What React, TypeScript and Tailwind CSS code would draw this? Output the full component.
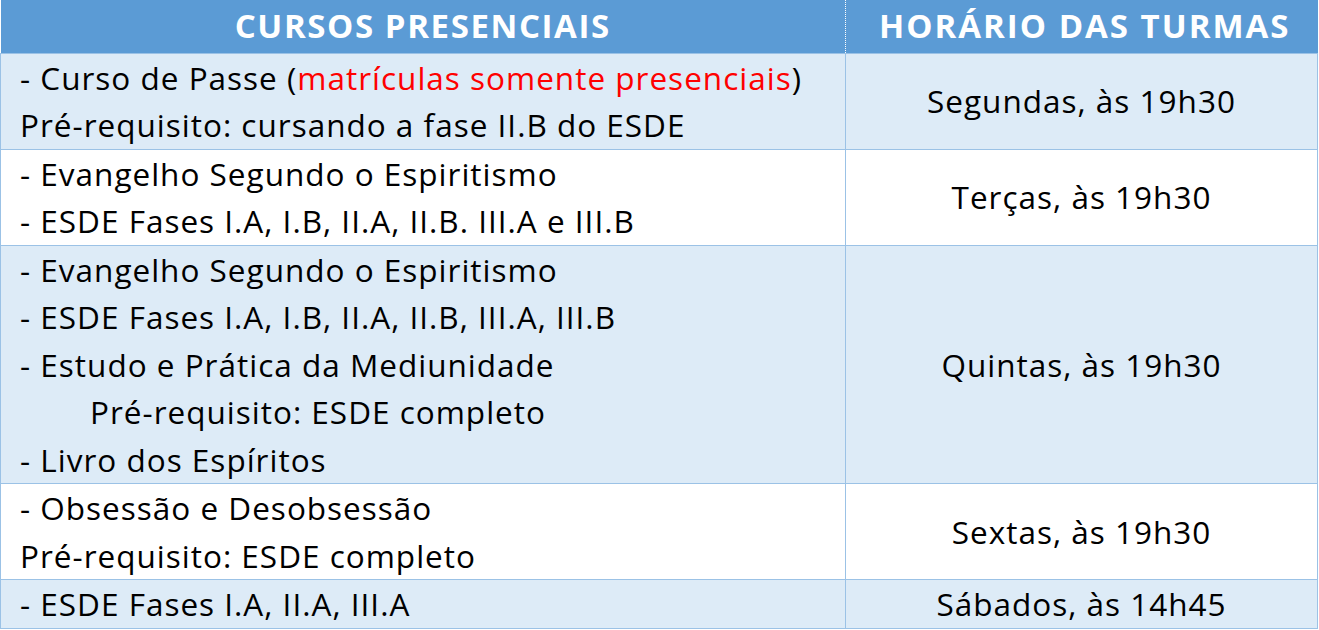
import React from "react";

type Row = {
  lines: React.ReactNode[];
  time: string;
  shaded: boolean;
};

const ROWS: Row[] = [
  {
    lines: [
      <>
        - Curso de Passe (<span className="text-[#ff0000]">matrículas somente presenciais</span>)
      </>,
      "Pré-requisito: cursando a fase II.B do ESDE",
    ],
    time: "Segundas, às 19h30",
    shaded: true,
  },
  {
    lines: ["- Evangelho Segundo o Espiritismo", "- ESDE Fases I.A, I.B, II.A, II.B. III.A e III.B"],
    time: "Terças, às 19h30",
    shaded: false,
  },
  {
    lines: [
      "- Evangelho Segundo o Espiritismo",
      "- ESDE Fases I.A, I.B, II.A, II.B, III.A, III.B",
      "- Estudo e Prática da Mediunidade",
      <span className="pl-[70px]">Pré-requisito: ESDE completo</span>,
      "- Livro dos Espíritos",
    ],
    time: "Quintas, às 19h30",
    shaded: true,
  },
  {
    lines: ["- Obsessão e Desobsessão", "Pré-requisito: ESDE completo"],
    time: "Sextas, às 19h30",
    shaded: false,
  },
  {
    lines: ["- ESDE Fases I.A, II.A, III.A"],
    time: "Sábados, às 14h45",
    shaded: true,
  },
];

export default function App() {
  return (
    <div className="min-h-screen w-[1319px] bg-white font-['Open_Sans',sans-serif] text-black">
      <table className="w-[1318px] border-collapse">
        <thead>
          <tr className="h-[53px] bg-[#5b9bd5] text-white">
            <th className="w-[845px] border-r border-dotted border-white text-[33px] leading-[52px] font-bold tracking-[1.6px]">
              CURSOS PRESENCIAIS
            </th>
            <th className="pl-[6px] text-[33px] leading-[52px] font-bold tracking-[2px]">HORÁRIO DAS TURMAS</th>
          </tr>
        </thead>
        <tbody>
          {ROWS.map((row, i) => (
            <tr key={i} className={row.shaded ? "bg-[#ddebf7]" : "bg-white"}>
              <td className="border border-[#9bc2e6] px-[19px] text-[31.5px] leading-[47.5px] tracking-[1px]">
                {row.lines.map((line, j) => (
                  <div key={j}>{line}</div>
                ))}
              </td>
              <td className="border border-[#9bc2e6] text-center text-[31.5px] leading-[47.5px] tracking-[1px]">
                {row.time}
              </td>
            </tr>
          ))}
        </tbody>
      </table>
    </div>
  );
}
